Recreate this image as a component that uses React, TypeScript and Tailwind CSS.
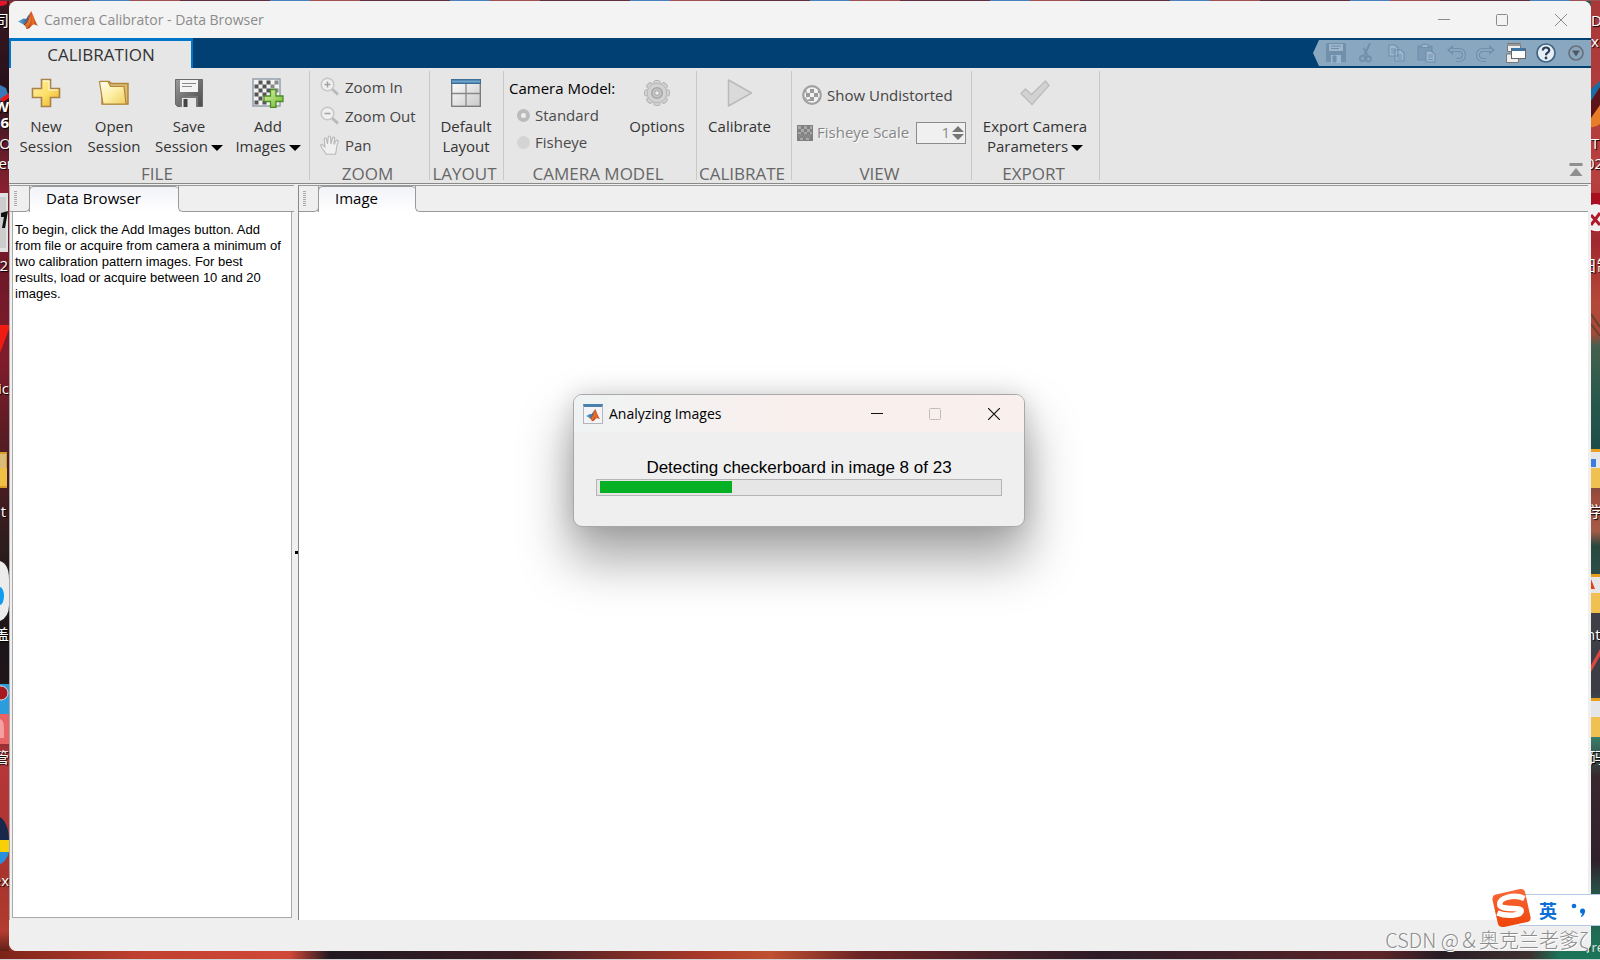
import React from "react";

const UI = "font-['Open_Sans','Noto_Sans','Noto_Sans_CJK_SC',sans-serif]";

/* ---------- icons ---------- */

function Matlab({ className }: { className?: string }) {
  return (
    <svg viewBox="0 0 20 20" className={className} aria-hidden="true">
      <defs>
        <linearGradient id="mb" x1="0" x2="1">
          <stop offset="0" stopColor="#5fb4dc" />
          <stop offset="1" stopColor="#2c4f8c" />
        </linearGradient>
        <linearGradient id="mo" x1="0" x2="1">
          <stop offset="0" stopColor="#5a1c1c" />
          <stop offset="0.35" stopColor="#c0391b" />
          <stop offset="0.65" stopColor="#e8702a" />
          <stop offset="1" stopColor="#a52a14" />
        </linearGradient>
      </defs>
      <path d="M0 11.500 5.500 8.500 8 9 12 3 9.500 11 5.500 14.500Z" fill="url(#mb)" />
      <path d="M5.500 14.500 9 11 13 1C15 3 17 12 20 16 17 14.500 15.500 14 14 15.500 12 18 10.500 19 8.500 19 8 17 7 15 5.500 14.500Z" fill="url(#mo)" />
      <path d="M8.500 19C8 17 7 15.500 6.500 14.500 9.500 13 11 9 12.500 5 13.500 9 12.500 15 8.500 19Z" fill="#f2a23c" opacity="0.6" />
    </svg>
  );
}

function PlusIcon() {
  return (
    <svg viewBox="0 0 30 30" className="size-[30px]" aria-hidden="true">
      <defs>
        <linearGradient id="gp" x1="0" y1="0" x2="1" y2="1">
          <stop offset="0" stopColor="#fff3a8" />
          <stop offset="0.5" stopColor="#fde06a" />
          <stop offset="1" stopColor="#eab020" />
        </linearGradient>
      </defs>
      <path d="M10.500 1.500h9v9h9v9h-9v9h-9v-9h-9v-9h9z" fill="url(#gp)" stroke="#a8824a" strokeWidth="1.600" />
      <path d="M12 3h6v9h9" fill="none" stroke="#fffbe0" strokeWidth="1" />
    </svg>
  );
}

function FolderIcon() {
  return (
    <svg viewBox="0 0 32 26" className="h-[26px] w-8" aria-hidden="true">
      <defs>
        <linearGradient id="gf" x1="0" y1="0" x2="1" y2="1">
          <stop offset="0" stopColor="#fffef0" />
          <stop offset="0.5" stopColor="#fdf0a8" />
          <stop offset="1" stopColor="#f0cf60" />
        </linearGradient>
      </defs>
      <path d="M4 24V2.500L2 1.500h9l2.500 2H30V24z" fill="#d9b870" stroke="#b3873d" strokeWidth="1.500" />
      <path d="M1.500 1.500h8.500l2.500 5h13.500l2 17.500H5z" fill="url(#gf)" stroke="#b3873d" strokeWidth="1.200" />
    </svg>
  );
}

function FloppyIcon({ className }: { className?: string }) {
  return (
    <svg viewBox="0 0 28 28" className={className} aria-hidden="true">
      <defs>
        <linearGradient id="gs" x1="0" y1="0" x2="1" y2="1">
          <stop offset="0" stopColor="#9a9a9a" />
          <stop offset="1" stopColor="#4a4a4a" />
        </linearGradient>
      </defs>
      <path d="M.5.500h27v27H2.500l-2-2z" fill="url(#gs)" stroke="#6a6a6a" />
      <path d="M5 1h18v12H5z" fill="#f4f4f4" />
      <path d="M7 4.500h14M7 7.500h10" stroke="#888" strokeWidth="1.200" />
      <path d="M5 17h18v11H5z" fill="#777" />
      <path d="M7 19h14v9H7z" fill="#e6e6e6" />
      <path d="M8.500 20h4v8h-4z" fill="#444" />
    </svg>
  );
}

function AddImagesIcon() {
  const cells: React.ReactNode[] = [];
  for (let r = 0; r < 6; r++)
    for (let c = 0; c < 6; c++)
      if ((r + c) % 2 === 1)
        cells.push(<rect key={`${r}-${c}`} x={2.5 + c * 4} y={2.5 + r * 4} width="4" height="4" fill={c > 3 ? "#8a8a8a" : "#555"} />);
  return (
    <svg viewBox="0 0 32 30" className="h-[30px] w-8" aria-hidden="true">
      <defs>
        <linearGradient id="gg" x1="0" y1="0" x2="1" y2="1">
          <stop offset="0" stopColor="#dff5a8" />
          <stop offset="1" stopColor="#6cb82c" />
        </linearGradient>
      </defs>
      <rect x="1" y="1" width="27" height="27" fill="#f2f2f2" stroke="#8d9aa6" strokeWidth="1.400" />
      {cells}
      <path d="M18.500 11.500h5.500v6.500h7v5.500h-7v6h-5.500v-6H12V18h6.500z" fill="url(#gg)" stroke="#4c8c2a" strokeWidth="1.300" />
    </svg>
  );
}

function Magnifier({ plus }: { plus?: boolean }) {
  return (
    <svg viewBox="0 0 20 20" className="size-5" aria-hidden="true">
      <path d="m12 12 6 5.500" stroke="#b9b9b9" strokeWidth="3" />
      <circle cx="7.500" cy="7.500" r="6.300" fill="#efefef" stroke="#c6c6c6" strokeWidth="1.500" />
      <path d="M4.500 7.500h6" stroke="#a2a2a2" strokeWidth="1.500" />
      {plus && <path d="M7.500 4.500v6" stroke="#a2a2a2" strokeWidth="1.500" />}
    </svg>
  );
}

function HandIcon() {
  return (
    <svg viewBox="0 0 20 20" className="size-5" aria-hidden="true">
      <path
        d="M6 19.200c-.6-2-2-3.200-3.500-5.200L.8 10.800c-.5-1.300 1-2 2-1L5 12 4.200 4.300c0-1.500 1.900-1.600 2.200-.2L7.500 9 8.200 2c.1-1.400 2.200-1.400 2.300 0l.4 7 1.600-6c.4-1.400 2.300-1 2.100.4L13.900 9.600l2.300-4c.8-1.200 2.400-.3 2 .9-.9 3-1.700 4.500-1.900 8 0 1.900-.4 3-.8 4.700z"
        fill="#f0f0f0" stroke="#b8b8b8" strokeWidth="1.100" />
    </svg>
  );
}

function LayoutIcon() {
  return (
    <svg viewBox="0 0 30 28" className="h-7 w-[30px]" aria-hidden="true">
      <defs>
        <linearGradient id="gl" x1="0" y1="0" x2="1" y2="1">
          <stop offset="0" stopColor="#ffffff" />
          <stop offset="1" stopColor="#c9c9c9" />
        </linearGradient>
      </defs>
      <rect x=".7" y=".7" width="28.600" height="26.600" fill="url(#gl)" stroke="#777" strokeWidth="1.300" />
      <rect x="0" y="0" width="30" height="5" fill="#3c6f98" />
      <rect x="1" y="1.500" width="28" height="2" fill="#6fa8cf" />
      <path d="M15 5v22M1 14.500h28" stroke="#888" strokeWidth="1.300" />
    </svg>
  );
}

function GearIcon() {
  return (
    <svg viewBox="-13 -13 26 26" className="size-[26px]" aria-hidden="true">
      {[0, 45, 90, 135, 180, 225, 270, 315].map((a) => (
        <rect key={a} x="-3" y="-12.500" width="6" height="6" rx="1.500" transform={`rotate(${a})`} fill="#d2d2d2" stroke="#b2b2b2" />
      ))}
      <circle r="9.700" fill="#d2d2d2" stroke="#b8b8b8" />
      <circle r="9" fill="#d2d2d2" />
      <circle r="5.300" fill="#c4c4c4" stroke="#a8a8a8" strokeWidth="1.600" />
      <circle r="2.300" fill="#ececec" stroke="#a8a8a8" />
    </svg>
  );
}

function PlayIcon() {
  return (
    <svg viewBox="0 0 26 28" className="h-7 w-[26px]" aria-hidden="true">
      <path d="M1.500 1 24.500 14 1.500 27z" fill="#dadada" stroke="#bababa" strokeWidth="1.500" strokeLinejoin="round" />
    </svg>
  );
}

function CheckIcon() {
  return (
    <svg viewBox="0 0 30 26" className="h-[26px] w-[30px]" aria-hidden="true">
      <path d="M1 13.500 5.500 9l6 5.500L25.500 1l3.500 4.500L12 24.500z" fill="#d2d2d2" stroke="#bcbcbc" strokeWidth="1.300" />
    </svg>
  );
}

function BallIcon() {
  return (
    <svg viewBox="0 0 20 20" className="size-5" aria-hidden="true">
      <circle cx="10" cy="10" r="9" fill="#f1f1f1" />
      <path d="M8 4h4v4H8zM4 8h4v4H4zM12 8h4v4h-4zM8 12h4v4H8zM4 4l-1.500 3L5 8zM12 4h4l2 4h-2V4zM12 12v4h3l2-3-1-1v4h-4zM4 12l-1 1 2 3h3v-2L5 15z" fill="#9a9a9a" />
      <circle cx="10" cy="10" r="8.800" fill="none" stroke="#a0a0a0" strokeWidth="2.200" />
    </svg>
  );
}

function ScaleIcon() {
  return (
    <svg viewBox="0 0 16 16" className="size-4" aria-hidden="true">
      <rect width="16" height="16" fill="#808080" />
      <path d="M1 1h3v3H1zM7 1h3v3H7zM13 1h2v3h-2zM4 4h3v3H4zM10 4h3v3h-3zM1 7h3v2H1zM7 7h3v2H7zM13 7h2v2h-2zM3 13h3v2H3zM9 13h3v2H9z" fill="#a9a9a9" />
      <path d="M1 10h14M2 12h12" stroke="#9c9c9c" strokeWidth="1" strokeDasharray="1 1" />
    </svg>
  );
}

const Caret = () => (
  <svg viewBox="0 0 12 6" className="ml-[3px] inline-block h-[6px] w-3 align-middle" aria-hidden="true">
    <path d="M0 0h12L6 6z" fill="#000" />
  </svg>
);

/* ---------- toolstrip ---------- */

function Section({ title, width, children }: { title: string; width: string; children: React.ReactNode }) {
  return (
    <section className={`my-[3px] flex shrink-0 flex-col border-r border-[#c8c8c8] ${width}`}>
      <div className="flex h-[93px] shrink-0">{children}</div>
      <h2 className="shrink-0 pr-1 text-center text-[17px] leading-5 whitespace-nowrap text-[#666]">{title}</h2>
    </section>
  );
}

function BigButton({ icon, lines, caret, width }: { icon: React.ReactNode; lines: string[]; caret?: boolean; width: string }) {
  return (
    <button type="button" className={`flex shrink-0 flex-col items-center text-[15px] leading-5 whitespace-nowrap text-[#333] ${width}`}>
      <span className="mt-[7px] mb-2 flex h-[30px] items-center justify-center">{icon}</span>
      {lines.map((l, i) => (
        <span key={l}>
          {l}
          {caret && i === lines.length - 1 && <Caret />}
        </span>
      ))}
    </button>
  );
}

function SmallButton({ icon, label }: { icon: React.ReactNode; label: string }) {
  return (
    <button type="button" className="flex h-[29px] items-center gap-[5px] text-[15px] leading-5 whitespace-nowrap text-[#444]">
      {icon}
      {label}
    </button>
  );
}

function Radio({ label, checked }: { label: string; checked?: boolean }) {
  return (
    <label className="flex h-[27px] items-center gap-[5px] pl-2 text-[15px] text-[#4a4a4a]">
      <input
        type="radio"
        name="model"
        defaultChecked={checked}
        className="size-[13px] appearance-none rounded-full bg-[#d4d4d4] checked:border-4 checked:border-[#bbb] checked:bg-[#eee]"
      />
      {label}
    </label>
  );
}

function Toolstrip() {
  return (
    <div className="relative flex h-[115px] shrink-0 overflow-hidden bg-[#e6e6e6]">
      <Section title="FILE" width="w-[301px]">
        <div className="flex pl-[3px]">
          <BigButton width="w-[68px]" icon={<PlusIcon />} lines={["New", "Session"]} />
          <BigButton width="w-[68px]" icon={<FolderIcon />} lines={["Open", "Session"]} />
          <BigButton width="w-[82px]" icon={<FloppyIcon className="size-7" />} lines={["Save", "Session"]} caret />
          <BigButton width="w-[76px]" icon={<AddImagesIcon />} lines={["Add", "Images"]} caret />
        </div>
      </Section>
      <Section title="ZOOM" width="w-[120px]">
        <div className="flex flex-col pt-px pl-[10px]">
          <SmallButton icon={<Magnifier plus />} label="Zoom In" />
          <SmallButton icon={<Magnifier />} label="Zoom Out" />
          <SmallButton icon={<HandIcon />} label="Pan" />
        </div>
      </Section>
      <Section title="LAYOUT" width="w-[74px]">
        <BigButton width="w-[72px]" icon={<LayoutIcon />} lines={["Default", "Layout"]} />
      </Section>
      <Section title="CAMERA MODEL" width="w-[193px]">
        <fieldset className="w-[118px] shrink-0 pt-1 pl-[5px]">
          <legend className="float-left h-[27px] w-full text-[15px] leading-[26px] whitespace-nowrap text-black">Camera Model:</legend>
          <div className="clear-left">
            <Radio label="Standard" checked />
            <Radio label="Fisheye" />
          </div>
        </fieldset>
        <BigButton width="w-[70px]" icon={<GearIcon />} lines={["Options"]} />
      </Section>
      <Section title="CALIBRATE" width="w-[95px]">
        <BigButton width="w-[85px]" icon={<PlayIcon />} lines={["Calibrate"]} />
      </Section>
      <Section title="VIEW" width="w-[180px]">
        <div className="flex flex-col pt-[9px] pl-[5px]">
          <div className="pl-[5px]">
            <SmallButton icon={<BallIcon />} label="Show Undistorted" />
          </div>
          <div className="mt-[9px] flex h-[29px] items-center">
            <ScaleIcon />
            <label htmlFor="scale" className="w-[103px] shrink-0 pl-1 text-[15px] whitespace-nowrap text-[#858585] [text-shadow:1px_1px_0_#fff]">Fisheye Scale</label>
            <span className="flex h-[22px] w-[50px] items-center border border-[#8c8c8c] bg-[#f0f0f0]">
              <input id="scale" type="text" defaultValue="1" className="w-[33px] min-w-0 bg-transparent text-right text-[15px] text-[#8a8a8a]" />
              <svg viewBox="0 0 12 16" className="ml-[2px] h-4 w-3" aria-hidden="true">
                <path d="M0 7 6 1l6 6zM0 9h12l-6 6z" fill="#777" />
              </svg>
            </span>
          </div>
        </div>
      </Section>
      <Section title="EXPORT" width="w-[128px]">
        <BigButton width="w-[126px]" icon={<CheckIcon />} lines={["Export Camera", "Parameters"]} caret />
      </Section>
      <button type="button" aria-label="Minimize toolstrip" className="mr-2 mb-[6px] ml-auto self-end">
        <svg viewBox="0 0 14 14" className="size-[14px]" aria-hidden="true">
          <path d="M.5 0h13v3H.5zM7 5l6.500 8H.5z" fill="#8f8f8f" />
        </svg>
      </button>
    </div>
  );
}

/* ---------- quick access bar ---------- */

const muted = "#7090ac";
function QuickAccess() {
  return (
    <div className="my-[2px] ml-auto flex">
      <svg viewBox="0 0 6 26" className="h-[26px] w-[6px]" aria-hidden="true">
        <path d="M6 0v26L0 13z" fill="#8aa7c0" />
      </svg>
      <div className="flex items-center gap-[10px] bg-[#8aa7c0] pr-[5px] pl-[7px]">
        <button type="button" aria-label="Save">
          <svg viewBox="0 0 20 20" className="size-5" aria-hidden="true">
            <path d="M1 0h18a1 1 0 0 1 1 1v18H1L0 18V1z" fill={muted} />
            <path d="M3 1h14v7H3zM5 12h10v8H5z" fill="#9db6cb" />
            <path d="M5 3h10M5 5.500h8M7 13v6h3v-6z" stroke={muted} fill={muted} />
          </svg>
        </button>
        <button type="button" aria-label="Cut">
          <svg viewBox="0 0 20 20" className="size-5" aria-hidden="true" fill="none" stroke={muted} strokeWidth="1.800">
            <path d="M14 0 8 13M7.500 5 12 13" />
            <circle cx="6.500" cy="15.500" r="2.700" />
            <circle cx="12.500" cy="16" r="2.500" />
          </svg>
        </button>
        <button type="button" aria-label="Copy">
          <svg viewBox="0 0 20 20" className="size-5" aria-hidden="true" fill="#9fb8cd" stroke={muted} strokeWidth="1.200">
            <path d="M3 2h6l3 3v8H3zM9 7h6l3 3v8H9z" />
            <path d="M5 6h5M5 8h4M5 10h4M11 12h5M11 14h5M11 16h5" />
          </svg>
        </button>
        <button type="button" aria-label="Paste">
          <svg viewBox="0 0 20 20" className="size-5" aria-hidden="true" fill="#9fb8cd" stroke={muted} strokeWidth="1.200">
            <path d="M2 3h14v14H2z" fill="#7b9ab5" />
            <path d="M5 4.500 6 2l3-1 3 1 1 2.500zM10 8h5l4 3v8h-9z" />
            <path d="M12 12h5M12 14h5M12 16.500h5" />
          </svg>
        </button>
        <button type="button" aria-label="Undo">
          <svg viewBox="0 0 20 20" className="size-5" aria-hidden="true" fill="none">
            <path d="M5 7h8q5 0 5 5t-5 5h-3" stroke={muted} strokeWidth="4" />
            <path d="M1 7l6-5v10z" fill={muted} />
            <path d="M4 7h9q5 0 5 5t-5 5h-3" stroke="#92aec6" strokeWidth="1.500" />
          </svg>
        </button>
        <button type="button" aria-label="Redo">
          <svg viewBox="0 0 20 20" className="size-5" aria-hidden="true" fill="none">
            <path d="M15 7H7q-5 0-5 5t5 5h3" stroke={muted} strokeWidth="4" />
            <path d="m19 7-6-5v10z" fill={muted} />
            <path d="M16 7H7q-5 0-5 5t5 5h3" stroke="#92aec6" strokeWidth="1.500" />
          </svg>
        </button>
        <button type="button" aria-label="Switch windows">
          <svg viewBox="0 0 20 20" className="size-5" aria-hidden="true">
            <path d="M1.500.500h13v8h-13zM.5 11h12v8.500H.5z" fill="#eee" stroke="#777" />
            <path d="M1.500 1h13v2h-13z" fill="#999" />
            <rect x="5.500" y="5.500" width="14" height="10" fill="#fff" stroke="#666" />
            <path d="M6 5h13v3H6z" fill="#3f74a5" />
          </svg>
        </button>
        <button type="button" aria-label="Help">
          <svg viewBox="0 0 20 20" className="size-5" aria-hidden="true">
            <circle cx="10" cy="10" r="9" fill="#e8eef4" stroke="#3f6485" strokeWidth="1.700" />
            <path d="M6.800 7.500Q7 4.500 10 4.500t3.200 2.700q0 1.800-2 2.800-1.200.7-1.200 2.200" fill="none" stroke="#25405c" strokeWidth="2.200" />
            <circle cx="10" cy="15" r="1.400" fill="#25405c" />
          </svg>
        </button>
        <button type="button" aria-label="More">
          <svg viewBox="0 0 20 20" className="size-5" aria-hidden="true">
            <circle cx="10" cy="10" r="7" fill="none" stroke="#66727c" strokeWidth="1.700" />
            <path d="M6 7.500h8l-4 6z" fill="#4f5961" />
          </svg>
        </button>
      </div>
    </div>
  );
}

/* ---------- document area ---------- */

function TabStrip({ label, tabWidth }: { label: string; tabWidth: string }) {
  return (
    <div role="tablist" className="flex h-[27px] shrink-0 border-t border-[#999] bg-[#efefef]">
      <div className="flex w-[11px] shrink-0 items-start border-b border-[#999] pt-[5px] pl-1">
        <span className="h-[15px] w-[3px] bg-[repeating-linear-gradient(#aaa_0_1px,transparent_1px_2px)]" />
      </div>
      <div className="w-[9px] shrink-0 rounded-br-[5px] border-r border-b border-[#999]" />
      <button
        type="button"
        role="tab"
        aria-selected="true"
        className={`shrink-0 -ml-px rounded-t-[5px] border-t border-[#999] border-l bg-linear-to-b from-[#f2f3f8] to-white pb-1 pl-4 text-left text-[15px] leading-5 text-black ${tabWidth}`}
      >
        {label}
      </button>
      <div className="-ml-px flex-1 rounded-bl-[5px] border-b border-l border-[#999]" />
    </div>
  );
}

function Documents() {
  return (
    <div className="flex min-h-0 flex-1 bg-[#efefef] pt-px pr-[3px]">
      <aside className="flex w-[285px] shrink-0 flex-col border-l border-[#aaa]">
        <TabStrip label="Data Browser" tabWidth="w-[150px]" />
        <div className="mx-[2px] mb-[2px] flex-1 border border-t-0 border-[#aaa] bg-white px-[2px] pt-[10px] font-['Liberation_Sans',Arial,sans-serif] text-[13px] leading-4 whitespace-pre text-black">
          {"To begin, click the Add Images button. Add\nfrom file or acquire from camera a minimum of\ntwo calibration pattern images. For best\nresults, load or acquire between 10 and 20\nimages."}
        </div>
      </aside>
      <div className="flex w-1 items-center justify-end">
        <span className="size-[3px] bg-black" />
      </div>
      <main className="flex min-w-0 flex-1 flex-col border-l border-[#888] bg-white">
        <TabStrip label="Image" tabWidth="w-[98px]" />
      </main>
    </div>
  );
}

/* ---------- dialog ---------- */

function Dialog() {
  return (
    <div className="pointer-events-none absolute inset-x-0 top-[394px] flex justify-center pr-[2px]">
      <div
        role="dialog"
        aria-label="Analyzing Images"
        className="pointer-events-auto flex h-[133px] w-[452px] flex-col rounded-[9px] border border-[#a8a8a8] bg-[#efefef] shadow-[0_30px_50px_4px_rgba(0,0,0,0.34),0_0_24px_rgba(0,0,0,0.14)]"
      >
        <header className="flex h-[37px] shrink-0 items-center rounded-t-[8px] bg-linear-to-r from-[#eff3f3] to-[#f9efed] to-50% pl-[9px]">
          <span className="flex size-5 items-center justify-center border border-t-[3px] border-[#b0b6bb] border-t-[#4a80ad] bg-[#f4f4f6]">
            <Matlab className="size-[14px]" />
          </span>
          <h1 className="ml-[6px] text-[14px] text-black">Analyzing Images</h1>
          <div className="ml-auto flex">
            <button type="button" aria-label="Minimize" className="flex w-[58px] justify-center">
              <svg viewBox="0 0 12 12" className="size-3"><path d="M0 5.500h12" stroke="#111" /></svg>
            </button>
            <button type="button" aria-label="Maximize" className="flex w-[58px] justify-center">
              <svg viewBox="0 0 12 12" className="size-3"><rect x=".5" y=".5" width="11" height="11" rx="1" fill="none" stroke="#c3bcbb" /></svg>
            </button>
            <button type="button" aria-label="Close" className="flex w-[60px] justify-center">
              <svg viewBox="0 0 12 12" className="size-3"><path d="m0 0 12 12M12 0 0 12" stroke="#111" strokeWidth="1.200" /></svg>
            </button>
          </div>
        </header>
        <p className="mt-[26px] text-center font-['Liberation_Sans',Arial,sans-serif] text-[17px] leading-5 text-black">
          Detecting checkerboard in image 8 of 23
        </p>
        <div role="progressbar" aria-valuenow={8} aria-valuemin={0} aria-valuemax={23} className="mx-[22px] mt-px h-[17px] border border-[#b5b5b5] bg-[#e6e6e6] px-[3px] pt-px">
          <div className="h-3 bg-[#06b025]" style={{ width: `${(7.6 / 23) * 100}%` }} />
        </div>
      </div>
    </div>
  );
}

/* ---------- desktop edges ---------- */

function Note({ className, children }: { className: string; children: string }) {
  return (
    <span className={`absolute text-[15px] leading-4 whitespace-nowrap text-white [text-shadow:1px_1px_1px_#000] ${className}`}>
      {children}
    </span>
  );
}

function LeftEdge() {
  return (
    <div className="relative w-[9px] shrink-0 overflow-hidden bg-[linear-gradient(#3a1822_0,#26101a_90px,#5a1c28_140px,#8c2030_192px,#6e1828_270px,#801c2c_360px,#5c1c24_430px,#2c1c1c_550px,#1a1418_640px,#20161a_680px,#b8363a_760px,#a8342c_880px,#b43c30_930px,#5c2016_951px)]">
      <svg viewBox="0 0 9 951" className="absolute top-0 left-0 h-[951px] w-[9px]" aria-hidden="true">
        <path d="M0 0h7v3q-3 2-7 2z" fill="#e8142a" />
        <path d="m0 84 6 3 3 9-9 4z" fill="#3a78b8" />
        <path d="m0 98 9-6v5l-6 4z" fill="#e81818" />
        <path d="M0 192h8v59H0z" fill="#e2e2e2" />
        <path d="M0 196h6v51H0z" fill="#cdcdcd" />
        <path d="m1 212 7-2-3 17H2l2-11H1z" fill="#111" />
        <path d="M0 324h9v4L0 352z" fill="#f01c14" />
        <path d="M0 451h7v36H0z" fill="#d89c28" />
        <path d="M0 453h6v14H0z" fill="#d8bc78" />
        <path d="M0 467h7v18H0z" fill="#f0c044" />
        <path d="M0 560q9 3 9 18v26q0 12-9 16z" fill="#ececec" />
        <ellipse cx="0" cy="595" rx="4" ry="9" fill="#109cf0" />
        <path d="M0 683h9v30H0z" fill="#2c9cdc" />
        <circle cx="1" cy="692" r="7" fill="#a81820" stroke="#ddd" />
        <path d="M0 713h9v30H0z" fill="#e86464" />
        <path d="M0 718q4 1 4 9v10H0z" fill="#f4a0a0" />
        <path d="M0 816q9 6 9 25H0z" fill="#18284c" />
        <path d="M0 839h9v12H0z" fill="#f8d008" />
        <path d="M0 851h9q-3 10-9 12z" fill="#2890dc" />
      </svg>
      <Note className="top-[11px] right-0">司</Note>
      <Note className="top-[97px] right-0 font-bold">W</Note>
      <Note className="top-[113px] right-0 font-bold">6</Note>
      <Note className="top-[134px] right-[-2px]">O</Note>
      <Note className="top-[154px] right-[-4px]">er</Note>
      <Note className="top-[256px] right-px">2</Note>
      <Note className="top-[379px] right-0">ic</Note>
      <Note className="top-[502px] right-[3px]">t</Note>
      <Note className="top-[625px] right-0">盖</Note>
      <Note className="top-[748px] right-0">管</Note>
      <Note className="top-[871px] right-0">ex</Note>
    </div>
  );
}

function RightEdge() {
  return (
    <div className="relative w-[9px] shrink-0 overflow-hidden bg-[linear-gradient(#a83838_0,#b84040_180px,#a02830_240px,#b44838_300px,#a84838_332px,#45604c_345px,#28584c_400px,#1c4c48_450px,#9c4c3c_495px,#a45c48_530px,#28483f_545px,#2c4c48_575px,#404048_600px,#3c3c44_690px,#38806c_735px,#38282e_775px,#30202c_860px,#28584c_895px,#1c7458_951px)]">
      <svg viewBox="0 0 9 951" className="absolute top-0 left-0 h-[951px] w-[9px]" aria-hidden="true">
        <path d="m0 88 9-8v6L0 102z" fill="#1c6ca4" />
        <path d="m0 100 9-14v36q-5 5-9 3z" fill="#5c1418" />
        <path d="m0 117 9-13v19q-5 4-9 3z" fill="#e87c28" />
        <path d="M0 192h9v39H0z" fill="#a81020" />
        <path d="M0 204q5-2 9 0v26q-5 1-9-1z" fill="#f0f0f0" />
        <path d="m0 214 9 10M9 212 0 224" stroke="#b01828" strokeWidth="3" />
        <path d="m0 313 9 13M0 323l9 12" stroke="#684030" strokeWidth="2" />
        {[448, 573, 697].map((y) => (
          <g key={y}>
            <path d={`M0 ${y}h9v3H0z`} fill="#e8a020" />
            <path d={`M0 ${y + 3}h9v16H0z`} fill="#e4e6e8" />
            <path d={`M0 ${y + 19}h9v20H0z`} fill="#f0c050" />
          </g>
        ))}
        <path d="M0 458h5v8H0z" fill="#3c7ce0" />
        <path d="m0 578 4 10H0z" fill="#e04020" />
        <path d="m0 664 9-16v7L0 671z" fill="#d84840" />
      </svg>
      <Note className="top-[11px] left-0">D</Note>
      <Note className="top-[32px] left-0">x</Note>
      <Note className="top-[134px] left-0">T</Note>
      <Note className="top-[154px] left-[-5px]">02</Note>
      <Note className="top-[256px] left-[-9px]">日制</Note>
      <Note className="top-[502px] left-[-2px]">学</Note>
      <Note className="top-[625px] left-[-5px]">nt</Note>
      <Note className="top-[748px] left-[-2px]">码</Note>
    </div>
  );
}

export default function App() {
  return (
    <div className={`relative flex h-screen flex-col overflow-hidden bg-[#8c2a2a] ${UI}`}>
      <div className="h-px shrink-0 bg-[repeating-linear-gradient(90deg,#603040_0_90px,#4a80c0_90px_130px,#a05050_130px_180px)]" />
      <div className="flex min-h-0 flex-1 bg-[linear-gradient(90deg,#8c3028_50%,#28584c)]">
        <LeftEdge />
        <div className="flex min-w-0 flex-1 flex-col overflow-hidden rounded-[8px] bg-[#efefef]">
          <header className="flex h-[37px] shrink-0 items-center bg-[#f3f3f3] pl-[9px]">
            <Matlab className="size-5" />
            <h1 className="ml-[6px] text-[14px] text-[#8b8b8b]">Camera Calibrator - Data Browser</h1>
            <div className="ml-auto flex">
              <button type="button" aria-label="Minimize" className="flex w-[58px] justify-center">
                <svg viewBox="0 0 12 12" className="size-3"><path d="M0 5.500h12" stroke="#8b8b8b" /></svg>
              </button>
              <button type="button" aria-label="Maximize" className="flex w-[58px] justify-center">
                <svg viewBox="0 0 12 12" className="size-3"><rect x=".5" y=".5" width="11" height="11" rx="1" fill="none" stroke="#8b8b8b" /></svg>
              </button>
              <button type="button" aria-label="Close" className="flex w-[60px] justify-center">
                <svg viewBox="0 0 12 12" className="size-3"><path d="m0 0 12 12M12 0 0 12" stroke="#8b8b8b" /></svg>
              </button>
            </div>
          </header>
          <nav className="flex h-[30px] shrink-0 bg-[#004073]">
            <button type="button" className="w-[184px] shrink-0 border-x-2 border-t-[3px] border-[#0076c8] bg-[#e6e6e6] text-[17px] leading-[26px] text-[#333]">
              CALIBRATION
            </button>
            <QuickAccess />
          </nav>
          <Toolstrip />
          <div className="h-px shrink-0 bg-[#8a8a86]" />
          <Documents />
          <footer className="h-[31px] shrink-0 bg-[#efefef]" />
        </div>
        <RightEdge />
      </div>
      <div className="h-2 shrink-0 bg-[linear-gradient(90deg,#7c2418_0,#c04030_140px,#d04838_290px,#201820_330px,#3c1c24_520px,#a83828_700px,#c05030_770px,#6c2424_860px,#2c1c28_1100px,#5c2428_1380px,#281c24_1440px,#3c3030_1530px,#1c7458_1560px)]" />
      <div className="h-px shrink-0 bg-[#cfcfcf]" />

      <Dialog />

      <div className="absolute right-0 bottom-[34px] flex h-8 w-[81px] items-center border-y border-[#b4c8e4] bg-white pl-[20px] text-[#0a6fd6]">
        <svg viewBox="0 0 42 40" className="absolute -top-[7px] -left-[28px] h-10 w-[42px]" aria-hidden="true">
          <defs>
            <linearGradient id="so" x1="0" y1="0" x2="0" y2="1">
              <stop offset="0" stopColor="#f8683a" />
              <stop offset="1" stopColor="#ee4408" />
            </linearGradient>
          </defs>
          <path d="M5 6.500 29 1q4-.7 5 3l5.500 25q.7 4-3 5L13 39q-5 .5-6-3L1.500 12Q1 7.500 5 6.500z" fill="url(#so)" />
          <path d="M34 11.500C24 6 9 9 9 15.500c0 7 21 3.500 21 8 0 5-15 5-24 .5" fill="none" stroke="#fff" strokeWidth="5.500" transform="rotate(-4 20 20)" />
        </svg>
        <span className="font-['Noto_Sans_CJK_SC',sans-serif] text-[18px] leading-6 font-bold">英</span>
        <svg viewBox="0 0 16 16" className="ml-[14px] size-4" aria-hidden="true" fill="#0a6fd6">
          <circle cx="3" cy="4" r="2.300" />
          <path d="M9 9.500a2.600 2.600 0 1 1 5 .5q-.3 3-3.500 5l-.8-1q1.500-1 1.600-2.200A2.400 2.400 0 0 1 9 9.500z" />
        </svg>
      </div>
      <p className="absolute right-3 bottom-[6px] text-right font-['Noto_Sans_CJK_SC',sans-serif] text-[20px] leading-7 font-light whitespace-nowrap text-[#8c8c8c] [text-shadow:1px_1px_0_#fff]">
        CSDN @＆奥克兰老爹ζ
      </p>
      <span className="absolute -right-1 bottom-[3px] text-[13px] leading-5 text-[#e4e4dc]">re</span>
    </div>
  );
}
